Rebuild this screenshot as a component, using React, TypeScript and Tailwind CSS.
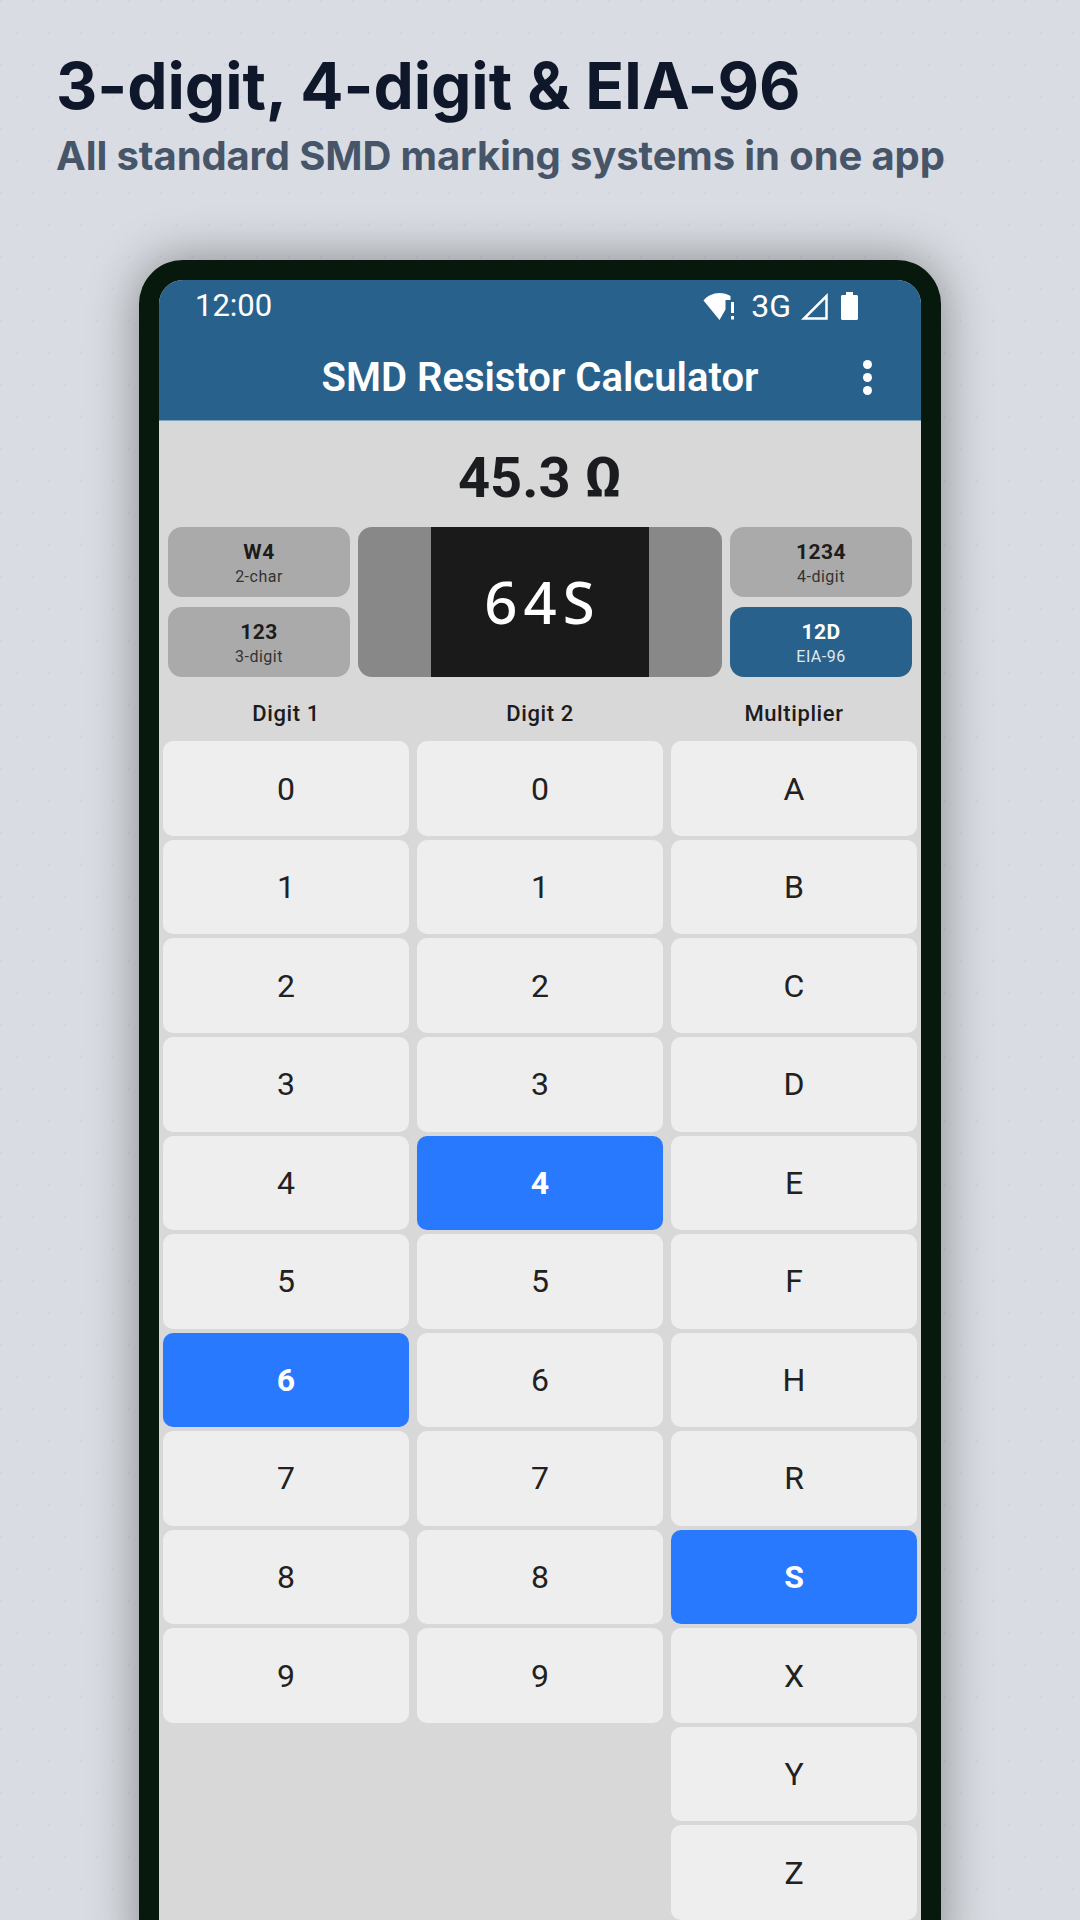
const digits = ["0", "1", "2", "3", "4", "5", "6", "7", "8", "9"];
const letters = ["A", "B", "C", "D", "E", "F", "H", "R", "S", "X", "Y", "Z"];

function Key({ label, active }: { label: string; active?: boolean }) {
  return (
    <div
      className={
        active
          ? "flex h-[94.55px] items-center justify-center rounded-[10px] bg-[#2979ff] text-[32px] font-bold text-white"
          : "flex h-[94.55px] items-center justify-center rounded-[10px] bg-[#eeeeee] text-[32px] text-[#212121]"
      }
    >
      {label}
    </div>
  );
}

function KeyColumn({ title, keys, active }: { title: string; keys: string[]; active: string }) {
  return (
    <div className="flex w-[246px] flex-col">
      <div className="flex h-[64.4px] items-center justify-center pt-[9px] text-[22px] font-medium tracking-[0.6px] text-[#1c1c1c]">
        {title}
      </div>
      <div className="flex flex-col gap-[4px]">
        {keys.map((k) => (
          <Key key={k} label={k} active={k === active} />
        ))}
      </div>
    </div>
  );
}

function ModeTab({ code, name, active }: { code: string; name: string; active?: boolean }) {
  return (
    <div
      className={
        active
          ? "flex h-[70px] w-[182px] flex-col items-center justify-center rounded-[14px] bg-[#28628c] pt-[3px] text-white"
          : "flex h-[70px] w-[182px] flex-col items-center justify-center rounded-[14px] bg-[#aaaaaa] pt-[3px] text-[#1c1c1c]"
      }
    >
      <span className="text-[21px] leading-[26px] font-bold tracking-[0.5px]">{code}</span>
      <span className="text-[16px] leading-[23px] tracking-[0.5px] opacity-85">{name}</span>
    </div>
  );
}

function StatusIcons() {
  return (
    <div className="flex items-center">
      <svg width="34" height="28" viewBox="0 0 34 28" fill="white" aria-hidden="true">
        <path d="M0.5 8.5C4.5 3.8 10 1 16.5 1c4 0 7.700 1 11 3v4h-5v9.500L16.500 28z" />
        <rect x="28" y="10" width="3" height="11" />
        <rect x="28" y="24" width="3" height="3.500" />
      </svg>
      <span className="ml-[14px] text-[32px] leading-none text-white">3G</span>
      <svg className="ml-[9px]" width="28" height="28" viewBox="0 0 28 28" fill="none" stroke="white" strokeWidth="2.500" aria-hidden="true">
        <path d="M26.500 4v22.500H4z" />
      </svg>
      <svg className="ml-[13px]" width="17" height="28" viewBox="0 0 17 28" fill="white" aria-hidden="true">
        <path d="M5 0h7v3h3.500c.8 0 1.500.7 1.500 1.500V26.500c0 .8-.7 1.500-1.500 1.500H1.500C.7 28 0 27.300 0 26.500V4.500C0 3.700.7 3 1.500 3H5z" />
      </svg>
    </div>
  );
}

export default function App() {
  return (
    <div className="h-[1920px] w-[1080px] overflow-hidden bg-[#d9dce2] bg-[radial-gradient(circle_at_1.5px_1.5px,#ccd4e7_1.2px,transparent_1.3px),radial-gradient(circle_at_1.5px_1.5px,#ccd4e7_1.2px,transparent_1.3px)] bg-[length:32px_64px] bg-[position:-1px_-1px,15px_31px] font-['Inter',sans-serif]">
      <div className="pt-[50px] pl-[56px]">
        <h1 className="text-[64px] leading-[72px] font-bold tracking-[-0.05px] text-[#0f172a]">3-digit, 4-digit &amp; EIA-96</h1>
        <p className="mt-[10px] text-[40px] leading-[48px] font-bold tracking-[-0.12px] text-[#475569]">
          All standard SMD marking systems in one app
        </p>
      </div>

      <div className="mx-auto mt-[80px] h-[1700px] w-[802px] rounded-t-[44px] border-x-[20px] border-t-[20px] border-[#06190c] bg-[#06190c] font-['Roboto',sans-serif] shadow-[0_0_50px_rgba(0,0,0,0.38)]">
        <div className="h-full overflow-hidden rounded-t-[24px] bg-[#d8d8d8]">
          <div className="h-[141px] border-b border-[#7fa3bd] bg-[#28628c] text-white">
            <div className="flex h-[50px] items-center justify-between pt-[1px] pr-[63px] pl-[36px]">
              <span className="text-[31px] leading-none">12:00</span>
              <StatusIcons />
            </div>
            <div className="relative flex h-[90px] items-center justify-center pt-[6px]">
              <span className="text-[40px] font-semibold">SMD Resistor Calculator</span>
              <div className="absolute top-[30px] right-[49px] flex flex-col gap-[4px]">
                <span className="h-[9px] w-[9px] rounded-full bg-white" />
                <span className="h-[9px] w-[9px] rounded-full bg-white" />
                <span className="h-[9px] w-[9px] rounded-full bg-white" />
              </div>
            </div>
          </div>

          <div className="flex h-[106px] items-center justify-center pt-[8px] text-[56px] font-bold text-[#1a1c20]">45.3 Ω</div>

          <div className="flex gap-[8px] px-[9px]">
            <div className="flex flex-col gap-[10px]">
              <ModeTab code="W4" name="2-char" />
              <ModeTab code="123" name="3-digit" />
            </div>
            <div className="flex h-[150px] w-[364px] overflow-hidden rounded-[14px] bg-[#888888]">
              <div className="w-[73px]" />
              <div className="flex flex-1 items-center justify-center bg-[#1a1a1a] pb-[2px] pl-[5px] font-['Noto_Sans',sans-serif] text-[58px] font-medium tracking-[6px] text-white">
                64S
              </div>
              <div className="w-[73px]" />
            </div>
            <div className="flex flex-col gap-[10px]">
              <ModeTab code="1234" name="4-digit" />
              <ModeTab code="12D" name="EIA-96" active />
            </div>
          </div>

          <div className="flex gap-[8px] px-[4px]">
            <KeyColumn title="Digit 1" keys={digits} active="6" />
            <KeyColumn title="Digit 2" keys={digits} active="4" />
            <KeyColumn title="Multiplier" keys={letters} active="S" />
          </div>
        </div>
      </div>
    </div>
  );
}
